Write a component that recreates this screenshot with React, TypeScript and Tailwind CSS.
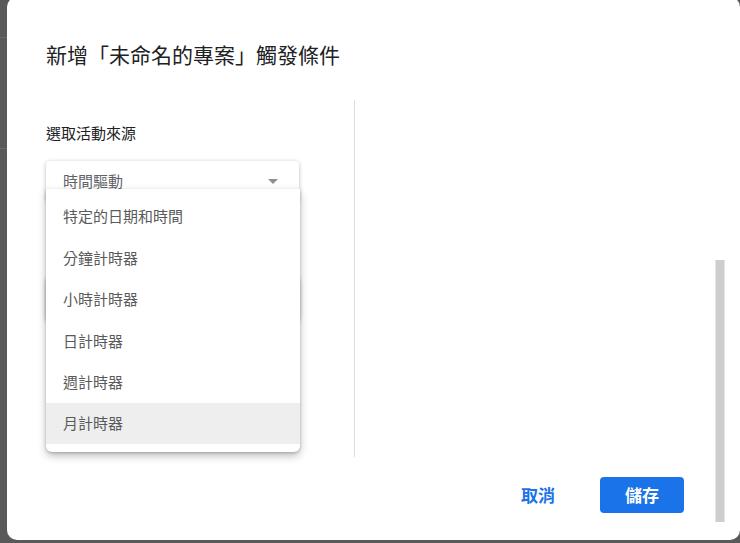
import React from "react";

const items = ["特定的日期和時間", "分鐘計時器", "小時計時器", "日計時器", "週計時器", "月計時器"];

export default function App() {
  const font = { fontFamily: '"Noto Sans CJK TC", "Noto Sans", sans-serif' };
  return (
    <div className="relative w-[740px] h-[543px] overflow-hidden bg-[#595959]" style={font}>
      <div className="absolute left-0 top-[37px] w-[7px] h-px bg-[#6a6a6a]" />
      <div className="absolute left-0 top-[148px] w-[7px] h-px bg-[#6a6a6a]" />
      <div className="relative ml-[7px] mt-[-3px] w-[733px] h-[543px] bg-white rounded-[10px] flex flex-col">
        <div className="pl-[39px] pt-[42px] h-[103px] text-[21px] leading-[30px] text-[#202124]">
          新增「未命名的專案」觸發條件
        </div>
        <div className="flex h-[357px]">
          <div className="relative w-[348px] border-r border-[#dadce0] pl-[39px] pr-[55px]">
            <div className="pt-[23px] text-[15px] leading-[20px] text-[#202124]">選取活動來源</div>
            <div className="mt-[18px] h-[40px] rounded-[4px] bg-white shadow-[0_1px_4px_rgba(0,0,0,0.28)] flex items-center pl-[17px] pr-[21px] text-[15px] text-[#5f6368]">
              <span className="flex-1 pt-[1px]">時間驅動</span>
              <svg width="10" height="5" viewBox="0 0 10 5"><path d="M0 0h10L5 5z" fill="#8f8f8f" /></svg>
            </div>
            <div className="mt-[76px] h-[44px] rounded-[4px] bg-white shadow-[0_1px_5px_rgba(0,0,0,0.35)]" />
            <div className="absolute left-[39px] top-[89px] w-[254px] h-[263px] bg-white rounded-b-[6px] pt-[7px] shadow-[0_4px_8px_rgba(0,0,0,0.25),0_1px_3px_rgba(0,0,0,0.2)]">
              {items.map((t, i) => (
                <div
                  key={t}
                  className={
                    "h-[41.4px] flex items-center pl-[17px] text-[15px] text-[#5a5a5a] " +
                    (i === 5 ? "bg-[#eeeeee]" : "")
                  }
                >
                  {t}
                </div>
              ))}
            </div>
          </div>
          <div className="flex-1" />
        </div>
        <div className="flex items-start justify-end pr-[56px] pt-[20px]">
          <button className="h-[36px] px-[9px] mr-[36px] text-[17px] font-semibold text-[#1a73e8]" style={font}>
            取消
          </button>
          <button className="h-[36px] w-[84px] rounded-[4px] bg-[#1a73e8] text-[17px] font-semibold text-white" style={font}>
            儲存
          </button>
        </div>
        <div className="absolute left-[708px] top-[263px] w-[10px] h-[262px] bg-[#cdcdcd] border-x border-[#e4e4e4]" />
      </div>
    </div>
  );
}
